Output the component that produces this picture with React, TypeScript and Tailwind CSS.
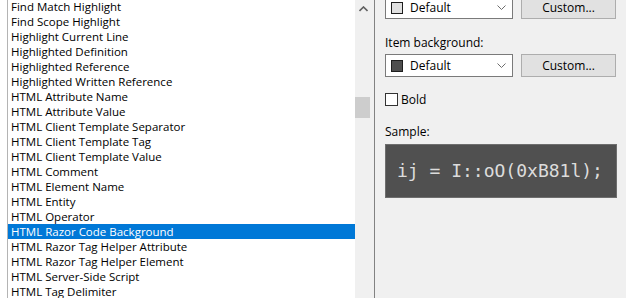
import React from 'react';

const items = [
  'Find Match Highlight',
  'Find Scope Highlight',
  'Highlight Current Line',
  'Highlighted Definition',
  'Highlighted Reference',
  'Highlighted Written Reference',
  'HTML Attribute Name',
  'HTML Attribute Value',
  'HTML Client Template Separator',
  'HTML Client Template Tag',
  'HTML Client Template Value',
  'HTML Comment',
  'HTML Element Name',
  'HTML Entity',
  'HTML Operator',
  'HTML Razor Code Background',
  'HTML Razor Tag Helper Attribute',
  'HTML Razor Tag Helper Element',
  'HTML Server-Side Script',
  'HTML Tag Delimiter',
];

const selected = 'HTML Razor Code Background';

function Chevron() {
  return (
    <svg width="9" height="5" viewBox="0 0 9 5" className="ml-auto mr-[6px]">
      <path d="M0.5 0.5 L4.5 4.5 L8.5 0.5" fill="none" stroke="#6d6d6d" strokeWidth="1" />
    </svg>
  );
}

function ColorCombo({ swatch }: { swatch: string }) {
  return (
    <div className="flex h-[23px] w-[128px] items-center border border-[#7a7a7a] bg-white">
      <div className={`ml-[5px] h-[12px] w-[12px] border border-[#1e1e1e] ${swatch}`}></div>
      <span className="ml-[7px] text-[12px] leading-[15px] text-black">Default</span>
      <Chevron />
    </div>
  );
}

function CustomButton() {
  return (
    <div className="flex h-[23px] w-[95px] items-center justify-center border border-[#adadad] bg-[#e1e1e1] text-[12px] leading-[15px] text-black">
      Custom...
    </div>
  );
}

export default function App() {
  return (
    <div
      className="flex h-[298px] w-[626px] overflow-hidden bg-[#f0f0f0]"
      style={{ fontFamily: '"Open Sans", "Noto Sans", sans-serif' }}
    >
      {/* item list */}
      <div className="flex w-[374px] shrink-0 bg-white">
        <div className="w-[7px] bg-white"></div>
        <div className="flex flex-1 border-l border-[#b4b4b4]">
          <div className="-mt-[1px] flex-1">
            {items.map((item) => (
              <div
                key={item}
                className={`h-[15px] pl-[3px] text-[11.5px] leading-[15px] whitespace-nowrap ${
                  item === selected ? 'bg-[#0078d7] text-white' : 'text-black'
                }`}
              >
                {item}
              </div>
            ))}
          </div>
          <div className="flex w-[17px] flex-col bg-[#f0f0f0]">
            <div className="flex h-[17px] items-center justify-center">
              <svg width="9" height="6" viewBox="0 0 9 6">
                <path d="M0.5 5 L4.5 1 L8.5 5" fill="none" stroke="#606060" strokeWidth="1.6" />
              </svg>
            </div>
            <div className="mt-[80px] h-[21px] w-[15px] bg-[#cdcdcd]"></div>
          </div>
          <div className="w-[2px] bg-[#f0f0f0]"></div>
        </div>
      </div>
      <div className="w-[1px] shrink-0 bg-[#828282]"></div>

      {/* settings */}
      <div className="flex flex-1 flex-col pl-[10px] text-[12px] leading-[15px] text-black">
        <div className="-mt-[4px] flex gap-[8px]">
          <ColorCombo swatch="bg-[#e0e0e0]" />
          <CustomButton />
        </div>
        <div className="mt-[16px]">Item background:</div>
        <div className="mt-[4px] flex gap-[8px]">
          <ColorCombo swatch="bg-[#4e4e4e]" />
          <CustomButton />
        </div>
        <div className="mt-[16px] flex h-[13px] items-center">
          <div className="h-[13px] w-[13px] border border-[#333333] bg-white"></div>
          <span className="ml-[3px]">Bold</span>
        </div>
        <div className="mt-[18px]">Sample:</div>
        <div className="mt-[5px] flex h-[54px] w-[232px] items-center border border-[#6e6e6e] bg-[#505050] pl-[11px]">
          <span
            className="text-[18px] leading-[22px] whitespace-pre text-[#dcdcdc]"
            style={{ fontFamily: '"DejaVu Sans Mono", "Liberation Mono", monospace' }}
          >
            ij = I::oO(0xB81l);
          </span>
        </div>
      </div>
    </div>
  );
}
